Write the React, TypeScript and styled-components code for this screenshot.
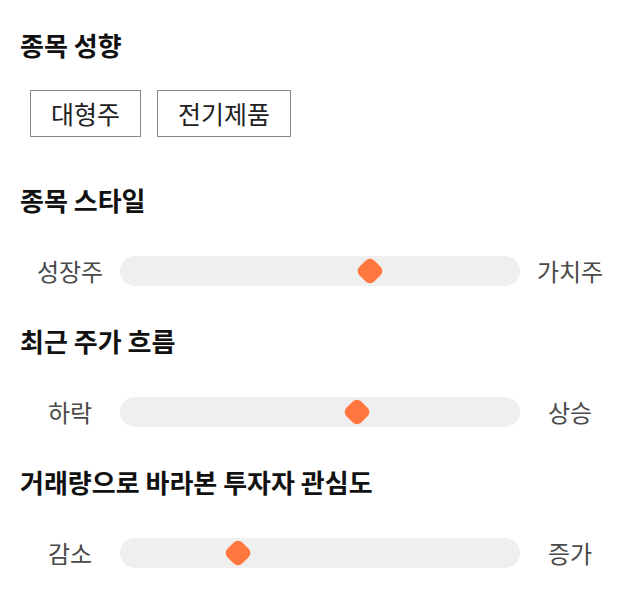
import styled, { createGlobalStyle } from 'styled-components'

const GlobalStyle = createGlobalStyle`
   body {
      margin: 0;
      background: #fff;
      font-family: "Noto Sans CJK KR", "Noto Sans", sans-serif;
   }
`

const Page = styled.main`
   padding: 28px 20px 20px 20px;
   width: 640px;
   box-sizing: border-box;
`

const Section = styled.section<{ $gap: number }>`
   margin-bottom: ${({ $gap }) => $gap}px;
`

const Heading = styled.h2<{ $space: number }>`
   margin: 0 0 ${({ $space }) => $space}px 0;
   font-size: 26px;
   line-height: 34px;
   font-weight: 700;
   color: #111;
`

const ChipList = styled.div`
   display: flex;
   gap: 16px;
   padding-left: 10px;
`

const Chip = styled.span`
   display: inline-block;
   padding: 6px 20px;
   border: 1px solid #8a8a8a;
   font-size: 25px;
   line-height: 33px;
   color: #222;
`

const SliderRow = styled.div`
   display: flex;
   align-items: center;
   height: 30px;
`

const SideLabel = styled.span`
   width: 100px;
   flex: none;
   text-align: center;
   font-size: 24px;
   line-height: 30px;
   color: #4a4a4a;
`

const Track = styled.div`
   position: relative;
   flex: 1;
   height: 30px;
   border-radius: 15px;
   background: #efefef;
`

const Thumb = styled.div`
   position: absolute;
   top: 50%;
   width: 21px;
   height: 21px;
   border-radius: 6px;
   background: #ff773f;
   transform: translate(-50%, -50%) rotate(45deg);
`

interface ISlider {
   title: string
   left: string
   right: string
   value: number
}

const sliders: ISlider[] = [
   { title: '종목 스타일', left: '성장주', right: '가치주', value: 62.5 },
   { title: '최근 주가 흐름', left: '하락', right: '상승', value: 59.3 },
   { title: '거래량으로 바라본 투자자 관심도', left: '감소', right: '증가', value: 29.5 },
]

export default function App() {
   return (
      <Page>
         <GlobalStyle />
         <Section $gap={46}>
            <Heading $space={28}>종목 성향</Heading>
            <ChipList>
               <Chip>대형주</Chip>
               <Chip>전기제품</Chip>
            </ChipList>
         </Section>
         {sliders.map((s) => (
            <Section $gap={38} key={s.title}>
               <Heading $space={39}>{s.title}</Heading>
               <SliderRow>
                  <SideLabel>{s.left}</SideLabel>
                  <Track>
                     <Thumb style={{ left: `${s.value}%` }} />
                  </Track>
                  <SideLabel>{s.right}</SideLabel>
               </SliderRow>
            </Section>
         ))}
      </Page>
   )
}
